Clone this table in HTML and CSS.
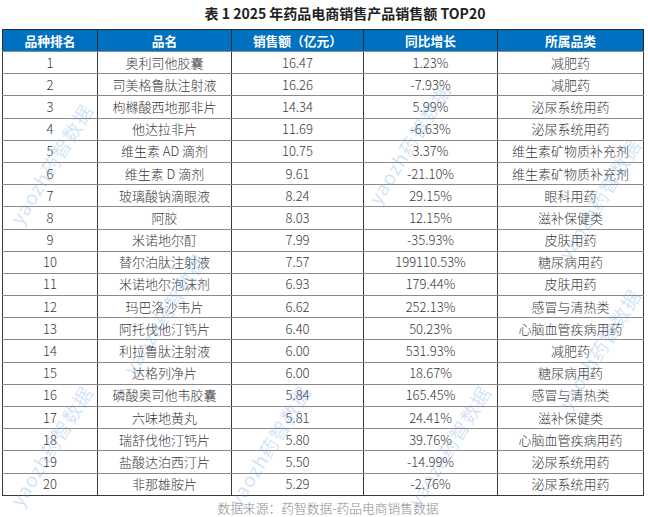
FILE: index.html
```html
<!DOCTYPE html>
<html lang="zh-CN">
<head>
<meta charset="utf-8">
<title>表 1 2025 年药品电商销售产品销售额 TOP20</title>
<link rel="stylesheet" href="styles.css">
</head>
<body>
<div class="page">
  <h1 class="title">表 1 2025 年药品电商销售产品销售额 TOP20</h1>
  <table class="sales">
    <colgroup>
      <col class="c1"><col class="c2"><col class="c3"><col class="c4"><col class="c5">
    </colgroup>
    <thead>
      <tr><th>品种排名</th><th>品名</th><th>销售额（亿元）</th><th>同比增长</th><th>所属品类</th></tr>
    </thead>
    <tbody>
      <tr><td>1</td><td>奥利司他胶囊</td><td>16.47</td><td>1.23%</td><td>减肥药</td></tr>
      <tr><td>2</td><td>司美格鲁肽注射液</td><td>16.26</td><td>-7.93%</td><td>减肥药</td></tr>
      <tr><td>3</td><td>枸橼酸西地那非片</td><td>14.34</td><td>5.99%</td><td>泌尿系统用药</td></tr>
      <tr><td>4</td><td>他达拉非片</td><td>11.69</td><td>-6.63%</td><td>泌尿系统用药</td></tr>
      <tr><td>5</td><td>维生素 AD 滴剂</td><td>10.75</td><td>3.37%</td><td>维生素矿物质补充剂</td></tr>
      <tr><td>6</td><td>维生素 D 滴剂</td><td>9.61</td><td>-21.10%</td><td>维生素矿物质补充剂</td></tr>
      <tr><td>7</td><td>玻璃酸钠滴眼液</td><td>8.24</td><td>29.15%</td><td>眼科用药</td></tr>
      <tr><td>8</td><td>阿胶</td><td>8.03</td><td>12.15%</td><td>滋补保健类</td></tr>
      <tr><td>9</td><td>米诺地尔酊</td><td>7.99</td><td>-35.93%</td><td>皮肤用药</td></tr>
      <tr><td>10</td><td>替尔泊肽注射液</td><td>7.57</td><td>199110.53%</td><td>糖尿病用药</td></tr>
      <tr><td>11</td><td>米诺地尔泡沫剂</td><td>6.93</td><td>179.44%</td><td>皮肤用药</td></tr>
      <tr><td>12</td><td>玛巴洛沙韦片</td><td>6.62</td><td>252.13%</td><td>感冒与清热类</td></tr>
      <tr><td>13</td><td>阿托伐他汀钙片</td><td>6.40</td><td>50.23%</td><td>心脑血管疾病用药</td></tr>
      <tr><td>14</td><td>利拉鲁肽注射液</td><td>6.00</td><td>531.93%</td><td>减肥药</td></tr>
      <tr><td>15</td><td>达格列净片</td><td>6.00</td><td>18.67%</td><td>糖尿病用药</td></tr>
      <tr><td>16</td><td>磷酸奥司他韦胶囊</td><td>5.84</td><td>165.45%</td><td>感冒与清热类</td></tr>
      <tr><td>17</td><td>六味地黄丸</td><td>5.81</td><td>24.41%</td><td>滋补保健类</td></tr>
      <tr><td>18</td><td>瑞舒伐他汀钙片</td><td>5.80</td><td>39.76%</td><td>心脑血管疾病用药</td></tr>
      <tr><td>19</td><td>盐酸达泊西汀片</td><td>5.50</td><td>-14.99%</td><td>泌尿系统用药</td></tr>
      <tr><td>20</td><td>非那雄胺片</td><td>5.29</td><td>-2.76%</td><td>泌尿系统用药</td></tr>
    </tbody>
  </table>
  <p class="source">数据来源：药智数据-药品电商销售数据</p>

  <div class="watermarks" aria-hidden="true">
    <span class="wm" style="left:-18px;top:150px">yaozh药智数据</span>
    <span class="wm" style="left:340px;top:130px">yaozh药智数据</span>
    <span class="wm" style="left:530px;top:185px">yaozh药智数据</span>
    <span class="wm" style="left:95px;top:300px">yaozh药智数据</span>
    <span class="wm" style="left:530px;top:335px">yaozh药智数据</span>
    <span class="wm" style="left:-18px;top:432px">yaozh药智数据</span>
    <span class="wm" style="left:200px;top:432px">yaozh药智数据</span>
    <span class="wm" style="left:380px;top:432px">yaozh药智数据</span>
  </div>
</div>
</body>
</html>
```

FILE: styles.css
```css
html, body {
  margin: 0;
  padding: 0;
  background: #ffffff;
}

body {
  font-family: "Noto Sans CJK SC", "Noto Sans", sans-serif;
  color: #333333;
}

.page {
  position: relative;
  width: 648px;
  height: 517px;
  overflow: hidden;
  padding: 0 0 0 2px;
  box-sizing: border-box;
}

.title {
  margin: 0;
  padding: 3px 0 0 46px;
  height: 26px;
  box-sizing: border-box;
  font-size: 14px;
  line-height: 20px;
  font-weight: 700;
  text-align: center;
  color: #222222;
  width: 640px;
}

.sales {
  border-collapse: collapse;
  table-layout: fixed;
  width: 641px;
  margin-top: 3px;
  font-size: 13px;
}

.c1 { width: 95px; }
.c2 { width: 134px; }
.c3 { width: 132px; }
.c4 { width: 134px; }
.c5 { width: 146px; }

.sales th {
  background: #0070c0;
  color: #ffffff;
  font-weight: 700;
  font-size: 12.75px;
  height: 21px;
  padding: 0;
  border-left: 1px solid #2a2a2a;
  border-right: 1px solid #2a2a2a;
  border-top: 1px solid #2a2a2a;
  border-bottom: 1px solid #8a8a8a;
  line-height: 20px;
}

.sales td {
  height: 21.2px;
  padding: 0;
  text-align: center;
  line-height: 20px;
  font-weight: 300;
  color: #383838;
  border-left: 1px solid #3a3a3a;
  border-right: 1px solid #3a3a3a;
  border-bottom: 1px solid #8a8a8a;
}

.sales tbody tr:last-child td {
  border-bottom: 1px solid #3a3a3a;
}

.source {
  margin: 3px 0 0;
  width: 652px;
  text-align: center;
  font-size: 12.75px;
  font-weight: 300;
  line-height: 18px;
  color: #8c8c8c;
}

.watermarks {
  position: absolute;
  inset: 0;
  pointer-events: none;
}

.wm {
  position: absolute;
  transform: rotate(-58deg);
  transform-origin: center center;
  font-size: 19px;
  font-weight: 400;
  letter-spacing: 1px;
  white-space: nowrap;
  color: rgba(90, 155, 225, 0.28);
}
```
